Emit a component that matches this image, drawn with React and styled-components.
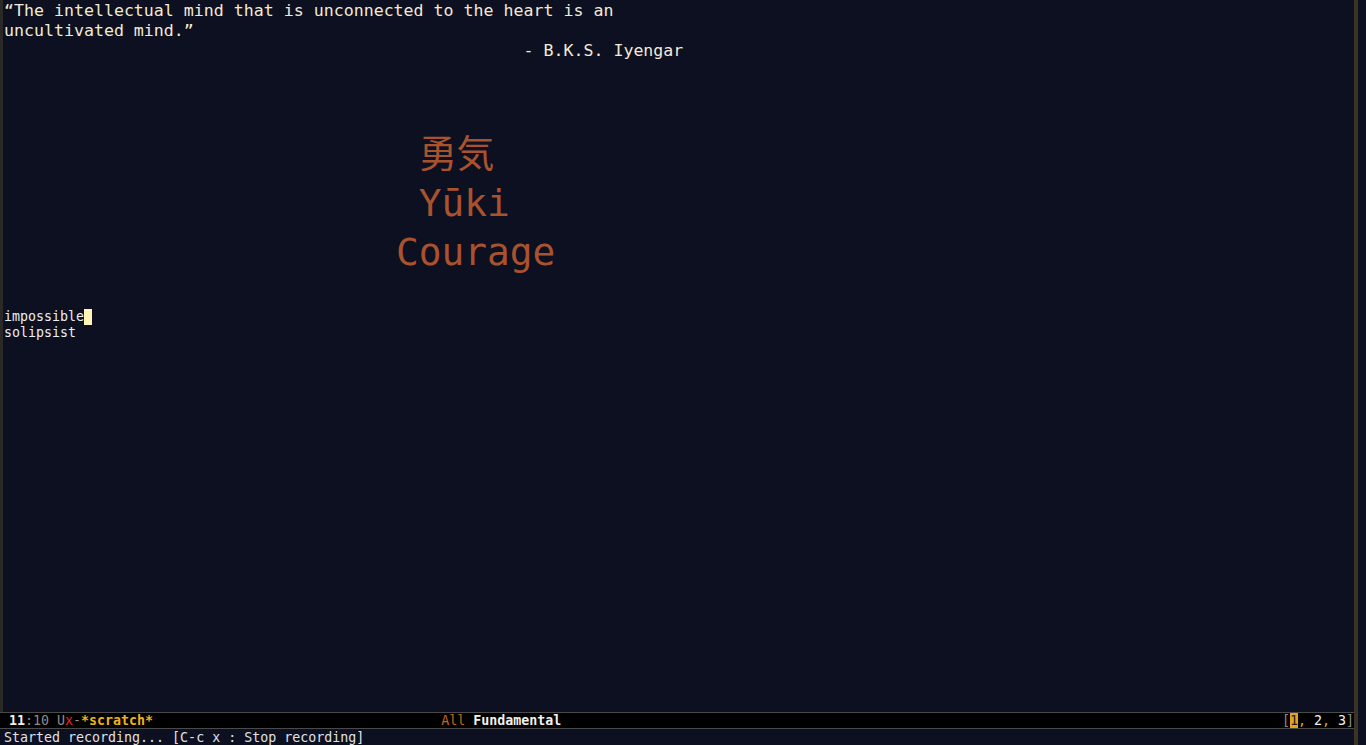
import styled, { createGlobalStyle } from "styled-components";

const mono = `"DejaVu Sans Mono", "Noto Sans CJK JP", monospace`;

const GlobalStyle = createGlobalStyle`
  html, body {
    margin: 0;
    padding: 0;
    height: 100%;
    overflow: hidden;
    background: #0c1021;
  }
`;

const Frame = styled.div`
  display: flex;
  height: 745px;
  width: 1366px;
  background: #0c1021;
  font-family: ${mono};
`;

const Main = styled.div`
  display: flex;
  flex-direction: column;
  width: 1354px;
`;

const Divider = styled.div`
  width: 4px;
  background: #3a3425;
`;

const Window = styled.div`
  display: flex;
  flex: 1;
  min-height: 0;
`;

const Fringe = styled.div`
  width: 3px;
  background: #2a2926;
`;

const Buffer = styled.div`
  flex: 1;
  padding-top: 1px;
  padding-left: 1px;
  white-space: pre;
`;

const Quote = styled.div`
  font-size: 16.6px;
  line-height: 20px;
  color: #f2ead6;
`;

const QuoteLine = styled.div`
  padding-left: ${(p) => p.$indent || 0}ch;
`;

const Banner = styled.div`
  margin-top: 69px;
  margin-left: 392px;
  font-size: 37.8px;
  line-height: 49px;
  color: #a9532e;
`;

const Words = styled.div`
  margin-top: 32px;
  font-size: 13.3px;
  line-height: 16px;
  color: #eceef2;
`;

const Cursor = styled.span`
  display: inline-block;
  width: 8px;
  height: 16px;
  vertical-align: top;
  background: #fff4b8;
`;

const Modeline = styled.div`
  display: flex;
  align-items: center;
  height: 15px;
  border-top: 1px solid #4a4a4a;
  border-bottom: 1px solid #4a4a4a;
  background: #000;
  padding-left: 9px;
  overflow: hidden;
  white-space: pre;
  font-size: 13.3px;
  line-height: 15px;
`;

const Seg = styled.span`
  color: ${(p) => p.$color || "#f0f0f0"};
  font-weight: ${(p) => (p.$bold ? "bold" : "normal")};
  background: ${(p) => p.$bg || "transparent"};
`;

const Middle = styled.div`
  margin-left: 288px;
`;

const Right = styled.div`
  margin-left: auto;
  display: flex;
  height: 15px;
`;

const Echo = styled.div`
  height: 16px;
  padding-left: 4px;
  font-size: 13.3px;
  line-height: 18px;
  color: #e2e2e2;
  white-space: pre;
  overflow: hidden;
`;

export default function App() {
  return (
    <>
      <GlobalStyle />
      <Frame>
        <Main>
          <Window>
            <Fringe />
            <Buffer>
              <Quote>
                <QuoteLine>“The intellectual mind that is unconnected to the heart is an</QuoteLine>
                <QuoteLine>uncultivated mind.”</QuoteLine>
                <QuoteLine $indent={52}>- B.K.S. Iyengar</QuoteLine>
              </Quote>
              <Banner>
                <div> 勇気</div>
                <div> Yūki</div>
                <div>Courage</div>
              </Banner>
              <Words>
                <div>
                  impossible<Cursor />
                </div>
                <div>solipsist</div>
              </Words>
            </Buffer>
          </Window>
          <Modeline>
            <Seg $bold>11</Seg>
            <Seg $color="#8c8c8c">:10 U</Seg>
            <Seg $color="#e8261f">x</Seg>
            <Seg $color="#8c8c8c">-</Seg>
            <Seg $bold $color="#ecb31c">*scratch*</Seg>
            <Middle>
              <Seg $color="#c2661a">All </Seg>
              <Seg $bold>Fundamental</Seg>
            </Middle>
            <Right>
              <Seg $color="#8c8c8c">[</Seg>
              <Seg $bg="#e8a21a" $color="#1a1a1a">1</Seg>
              <Seg $color="#e8a21a">, </Seg>
              <Seg>2</Seg>
              <Seg $color="#e8a21a">, </Seg>
              <Seg>3</Seg>
              <Seg $color="#8c8c8c">]</Seg>
            </Right>
          </Modeline>
          <Echo>Started recording... [C-c x : Stop recording]</Echo>
        </Main>
        <Divider />
      </Frame>
    </>
  );
}
